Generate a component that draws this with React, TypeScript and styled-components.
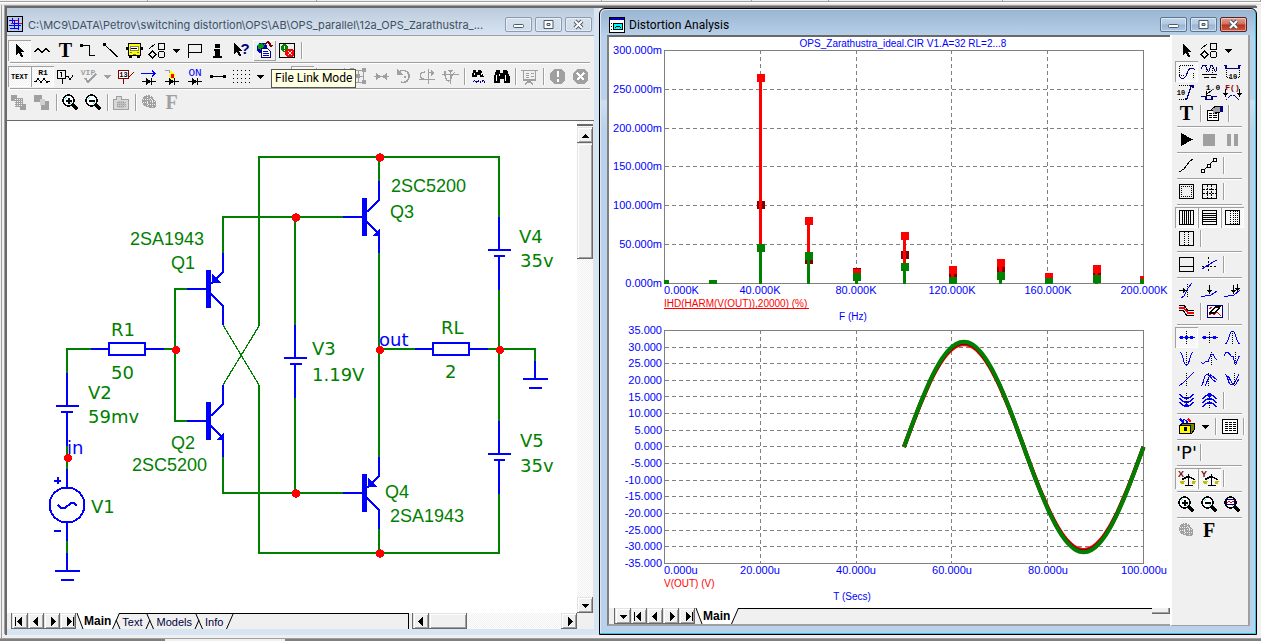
import React from "react";
import styled, { createGlobalStyle, css } from "styled-components";

const GREEN = "#008000";
const BLUE = "#0000ff";
const RED = "#ff0000";
const DARK_RED = "#800000";
const GRAY = "#a0a0a0";

const dither = css`
  background: conic-gradient(#fff 25%, #f0f0f0 0 50%, #fff 0 75%, #f0f0f0 0) 0 0 / 2px 2px;
`;

const Global = createGlobalStyle`
  * { box-sizing: border-box; }
  body { margin: 0; background: #f0f0f0; font-family: "Liberation Sans", Arial, sans-serif; }
  button { font-family: inherit; color: inherit; padding: 0; margin: 0; border: 0; background: none; border-radius: 0; }
  svg { display: block; flex: none; }
`;

/* ---------- application frame ---------- */

const Page = styled.div`
  min-height: 100vh;
  display: flex;
  flex-direction: column;
  background: #f0f0f0;
`;

const StatusStrip = styled.div`
  height: 5px;
  display: flex;
  border-bottom: 1px solid #e3e3e3;
  background: linear-gradient(#f0f0f0 1px, #a0a0a0 1px 2px, #fff 2px 3px, #f0f0f0 3px);
`;

const StripCell = styled.div<{ $grow: number }>`
  flex: ${(p) => p.$grow} 1 0;
  height: 2px;
  border-right: 1px solid #a0a0a0;
`;

const Frame = styled.div`
  margin: 0 2px 0 1px;
  padding: 0 2px 3px 2px;
  border-left: 1px solid #a0a0a0;
`;

const Workspace = styled.main`
  display: grid;
  grid-template-columns: minmax(0, 592fr) minmax(0, 658fr);
  border-style: solid;
  border-color: #696969 #a0a0a0 #f0f0f0 #696969;
  border-width: 2px 0 0 2px;
  box-shadow: -1px -1px 0 #a0a0a0;
  margin: 1px 0 0 1px;
`;

const BottomStrip = styled.div`
  height: 3px;
  display: flex;
  border-top: 1px solid #a0a0a0;
`;

const BottomCell = styled.div<{ $grow: number; $dark?: boolean }>`
  flex: ${(p) => p.$grow} 1 0;
  background: ${(p) => (p.$dark ? "#808080" : "#f0f0f0")};
`;

/* ---------- windows ---------- */

const CircuitWindow = styled.section`
  background: #d7e4f2;
  padding: 0 5px 6px 0;
  display: flex;
  flex-direction: column;
`;

const AnalysisWindow = styled.section`
  display: flex;
  flex-direction: column;
  background: linear-gradient(#99b4d1, #b9d1ea 28px 90px, #d0e0f0 92px, #b9d1ea 120px);
  border: 1px solid #000;
  border-radius: 6px 6px 0 0;
  padding: 0 6px 8px 7px;
  box-shadow: inset -1px -1px 0 #31c4dc, inset 1px 1px 0 #d8e8f8;
`;

const TitleBar = styled.header<{ $active?: boolean }>`
  height: ${(p) => (p.$active ? 26 : 27)}px;
  display: flex;
  align-items: center;
  gap: 4px;
  padding: ${(p) => (p.$active ? "5px 1px 0 2px" : "6px 0 0 0")};
  background: ${(p) => (p.$active ? "none" : "linear-gradient(#bccbdc, #d7e4f2)")};
`;

const Title = styled.h1<{ $active?: boolean }>`
  flex: 1;
  min-width: 0;
  margin: 0;
  white-space: nowrap;
  font: ${(p) => (p.$active ? "12px/18px Roboto" : "11px/18px Inter")}, "Open Sans", sans-serif;
  color: ${(p) => (p.$active ? "#000" : "#43505e")};
`;

const CaptionGroup = styled.div`
  display: flex;
  gap: 3px;
  padding-right: 2px;
`;

const CaptionButton = styled.button<{ $kind: "idle" | "active" | "close" }>`
  width: 27px;
  height: 15px;
  display: flex;
  align-items: center;
  justify-content: center;
  border-radius: 2px;
  border: 1px solid ${(p) => (p.$kind === "close" ? "#5b1f25" : p.$kind === "active" ? "#5b7693" : "#8c9bb0")};
  background: ${(p) =>
    p.$kind === "close"
      ? "linear-gradient(#e0a093, #cf6f5c 48%, #b8321c 52%, #cf5a3c)"
      : p.$kind === "active"
        ? "linear-gradient(#c3d5e8, #b3cae2 48%, #98b5d3 52%, #aec7e0)"
        : "linear-gradient(#d5e0ec, #d0dce9)"};
  box-shadow: inset 0 0 0 1px rgba(255, 255, 255, 0.45);
`;

/* ---------- toolbars ---------- */

const ToolArea = styled.div`
  border-top: 1px solid #a0a0a0;
  background: #f0f0f0;
  border-bottom: 1px solid #696969;
  height: 86px;
`;

const ToolRow = styled.div<{ $top: number; $last?: boolean }>`
  position: relative;
  display: flex;
  height: ${(p) => p.$top + 24}px;
  padding: ${(p) => p.$top}px 0 0 1px;
  margin-right: 4px;
  &::after {
    content: "";
    display: ${(p) => (p.$last ? "none" : "block")};
    position: absolute;
    left: 3px;
    right: 0;
    bottom: 0;
    border-top: 1px solid #a0a0a0;
    border-bottom: 1px solid #fff;
  }
`;

const ToolButton = styled.button<{ $pressed?: boolean; $raised?: boolean; $slim?: boolean }>`
  flex: none;
  width: ${(p) => (p.$slim ? 15 : 23)}px;
  height: 21px;
  display: flex;
  align-items: center;
  justify-content: center;
  ${(p) =>
    p.$pressed &&
    css`
      ${dither}
      box-shadow: inset 1px 1px 0 #a0a0a0, inset -1px -1px 0 #fff;
    `}
  ${(p) =>
    p.$raised &&
    css`
      box-shadow: inset 1px 1px 0 #fff, inset -1px -1px 0 #a0a0a0;
    `}
`;

const Separator = styled.span`
  flex: none;
  width: 5px;
  height: 17px;
  margin-top: 2px;
  background: linear-gradient(90deg, transparent 2px, #a0a0a0 2px 3px, #fff 3px 4px, transparent 4px);
`;

const Tooltip = styled.div`
  position: absolute;
  left: 264px;
  top: 5px;
  z-index: 2;
  padding: 0 3px;
  border: 1px solid #575757;
  background: #ffffe1;
  color: #000;
  white-space: nowrap;
  font: 12px/17px Roboto, "Open Sans", sans-serif;
`;

const SideBar = styled.aside`
  width: 80px;
  flex: none;
  background: #f0f0f0;
  border-left: 2px solid #fff;
  border-right: 2px solid #a0a0a0;
  border-bottom: 1px solid #a0a0a0;
  padding: 5px 0 0 3px;
`;

const SideGroup = styled.div`
  display: flex;
  flex-direction: column;
  margin-right: 6px;
  & + & {
    padding-top: 5px;
    background: linear-gradient(transparent 2px, #a0a0a0 2px 3px, #fff 3px 4px, transparent 4px) 2px 0 no-repeat;
  }
`;

const SideRow = styled.div`
  display: flex;
`;

/* ---------- drawing area, scroll bars, sheet tabs ---------- */

const CanvasRow = styled.div`
  display: flex;
  flex: 1;
  background: #fff;
`;

const Drawing = styled.svg`
  flex: 1 1 0;
  width: 100%;
  min-width: 0;
  height: auto;
  background: #fff;
`;

const VScroll = styled.div`
  width: 17px;
  display: flex;
  flex-direction: column;
  padding-top: 3px;
  ${dither}
  border-right: 1px solid #e3e3e3;
`;

const Splitter = styled.div`
  height: 2px;
  background: #696969;
  margin-bottom: 1px;
`;

const Bevel = styled.button`
  flex: none;
  width: 16px;
  height: 16px;
  display: flex;
  align-items: center;
  justify-content: center;
  background: #f0f0f0;
  box-shadow: inset -1px -1px 0 #696969, inset 1px 1px 0 #e3e3e3, inset 2px 2px 0 #fff, inset -2px -2px 0 #a0a0a0;
`;

const VThumb = styled(Bevel)`
  height: 116px;
`;

const HThumb = styled(Bevel)`
  width: 38px;
`;

const SplitBox = styled.div`
  width: 18px;
  height: 6px;
  background: #f0f0f0;
  box-shadow: inset -1px -1px 0 #696969, inset -2px -2px 0 #a0a0a0;
`;

const Grow = styled.div`
  flex: 1;
`;

const TabRow = styled.div`
  display: flex;
  height: 16px;
  background: #f0f0f0;
  padding-left: 4px;
`;

const NavGroup = styled.div`
  display: flex;
  padding-left: 1px;
  background: #696969;
`;

const Tab = styled.button<{ $active?: boolean }>`
  height: 16px;
  color: ${(p) => (p.$active ? "#000" : "#000040")};
  font-size: ${(p) => (p.$active ? 12 : 11)}px;
  line-height: 16px;
  font-weight: ${(p) => (p.$active ? 700 : 400)};
  background: ${(p) => (p.$active ? "#fff" : "none")};
  border-top: ${(p) => (p.$active ? "none" : "1px solid #000")};
`;

const TabFill = styled.div<{ $open?: boolean }>`
  flex: 1;
  border-top: 1px solid #000;
  border-right: ${(p) => (p.$open ? "none" : "1px solid #000")};
`;

const HScroll = styled.div`
  width: 165px;
  display: flex;
  margin-left: 3px;
  border-left: 1px solid #696969;
  ${dither}
`;

const Corner = styled.div`
  width: 17px;
  background: #f0f0f0;
`;

const Client = styled.div`
  display: flex;
  flex: 1;
`;

const PlotPane = styled.div`
  flex: 1;
  min-width: 0;
  display: flex;
  flex-direction: column;
  background: #f0f0f0;
  border-top: 2px solid #696969;
  border-left: 2px solid #808080;
  border-bottom: 2px solid #a0a0a0;
`;

const PlotTabs = styled(TabRow)`
  padding-left: 5px;
`;

/* ---------- icons ---------- */

type LineProps = { d: string; c?: string; f?: string; w?: number; dash?: string };
const L = ({ d, c = "#000", f = "none", w = 1, dash }: LineProps) => (
  <path d={d} stroke={c} fill={f} strokeWidth={w} strokeDasharray={dash} />
);
const B = ({ d, f = "#000" }: { d: string; f?: string }) => <path d={d} fill={f} />;
const T = ({ x, y, s, c = "#000", children, font = "Liberation Sans", bold = true }: {
  x: number; y: number; s: number; c?: string; children: string; font?: string; bold?: boolean;
}) => (
  <text x={x} y={y} fontSize={s} fill={c} fontFamily={`"${font}", sans-serif`} fontWeight={bold ? 700 : 400} textAnchor="middle">
    {children}
  </text>
);

const DIODE = "M3 15.5h4M13 15.5h4M12.5 12v7";
const DIODE_FILL = "M7 12l5 3.5-5 3.5z";
const SQUARE = "M3.500 3.500h14v14h-14z";
const bulb = (c: string) => (
  <>
    <circle cx="9" cy="9" r="6" fill={c} />
    <path d="M4 7h9M4 10h11M8 3v12M11 4v11" stroke="#f0f0f0" strokeDasharray="1 1" />
    <circle cx="13" cy="12" r="4.5" fill={c} />
    <path d="M9 12h8M11 9.5h5M13 8v9" stroke="#f0f0f0" strokeDasharray="1 1" />
  </>
);
const lens = (
  <>
    <circle cx="8.5" cy="8.5" r="5.5" fill="#fff" stroke="#000" strokeWidth="1.6" />
    <L d="M5 7l2-2M10 12l2-2" c="#00ffff" />
    <L d="M12.5 12.5l5 5" w={3} />
  </>
);

const icons: Record<string, React.ReactNode> = {
  pointer: <B d="M7 4v11l3-2.500 2 5 2-1-2-4.500h3.500z" />,
  component: <L d="M2 11.500h1l3-3 4 4 4-4 3 3h1" />,
  text: <T x={10.5} y={17} s={20} font="Liberation Serif">T</T>,
  wire: <><B d="M2 4h3v3h-3z" /><L d="M4 5.500h7.500v10h5.500" /></>,
  line: <><B d="M2 3h3v3h-3z" /><L d="M4 5l12.500 12" w={1.2} /></>,
  bus: (
    <>
      <L d="M4.500 3.500h12v12h-12z" f="#ffff00" /><B d="M5 16h3v2h-3zM13 16h3v2h-3zM2 7h2v3h-2zM17 7h2v3h-2z" />
      <L d="M6.500 6.500h8v4h-8z" c="#808080" f="#fff" /><L d="M7 9l2-1 2 1 2-1" /><L d="M6 12.500h2M13 12.500h2M9 14.500h3" c="#808000" />
    </>
  ),
  shapes: <><L d="M2.500 8.500l6-5M11.500 3.500h6v6h-6zM5.500 11l3.500 3.500-3.500 3.500-3.500-3.500z" /><circle cx="14.5" cy="14.5" r="3.2" fill="none" stroke="#000" /></>,
  flag: <L d="M3.500 4v14M3.500 4.500h13v8h-13" />,
  info: <B d="M7 4h5v4h-5zM6 9h6v7h2v2h-9v-2h2v-5h-1z" />,
  help: <><B d="M3 3v11l3-2.500 2 5 2-1-2-4.500h3.500z" /><T x={14} y={14} s={15} c="#000080">?</T></>,
  fileLink: (
    <>
      <circle cx="8" cy="8" r="5.5" fill="#0000c0" /><B d="M4 5l4-2 2 3-3 4-3-1z" f="#00a000" /><L d="M3 6l2-2M10 4l2 1" c="#00c0c0" />
      <L d="M11 4l3-2 3 3" c={DARK_RED} w={1.5} /><B d="M14 5h5l-2 3z" f={DARK_RED} />
      <L d="M7.500 8.500h6l3 3v6h-9z" f="#fff" c="#000080" /><L d="M9 11.500h5M9 13.500h6M9 15.500h6" c="#0000c0" />
    </>
  ),
  checks: (
    <>
      <L d="M2.500 3.500h15v14h-15z" f="#f0f0f0" w={1.6} /><circle cx="7.5" cy="8" r="3.7" fill={GREEN} /><L d="M7.500 5.500v3M7.500 9.500v1" c="#fff" />
      <B d="M10 9h5l2 2v4l-2 2h-5l-2-2v-4z" f={RED} /><L d="M11 11l4 4M15 11l-4 4" c="#fff" />
    </>
  ),
  gridText: <T x={10.5} y={13} s={7} font="Liberation Mono">TEXT</T>,
  attrText: <><T x={11} y={9} s={8} font="Liberation Mono">R1</T><L d="M2 15.500h2l2-3 3 4 3-4 3 4 1-1h2" /></>,
  nodeNum: <><L d="M2.500 4.500h8v8h-8z" w={1.5} /><L d="M5 6.500h1.500v4M7 13v5M11 10.500h2l2 3 3-4" /></>,
  vip: <><T x={10} y={9} s={8} c={GRAY} font="Liberation Mono">VIP</T><L d="M7 12l3 4 8-8" c={GRAY} w={2} /></>,
  thirteen: <><L d="M2.500 4.500h10v8h-10z" c={DARK_RED} f="#fff" /><T x={7.5} y={11} s={7} font="Liberation Mono">13</T><L d="M7.500 13v5M13 11l5-5" c={DARK_RED} /></>,
  current: <><L d="M2 7.500h14M13 4.500l3 3-3 3" c={BLUE} /><L d="M3 15.500h14M12.500 12v7" /><B d={DIODE_FILL} /></>,
  power: <><L d="M3 4.500h4l2 3" c={GRAY} w={1.6} /><B d="M9 4l4 5-1 4h-4l-1-4z" f="#ffff00" /><B d="M9 8h3v4h-3z" f={RED} /><L d={DIODE} /><B d={DIODE_FILL} /></>,
  condition: <><T x={10} y={10} s={11} c={BLUE} bold={false} font="Liberation Mono">ON</T><L d="M3 15.500h14M12.500 12v7" /><B d={DIODE_FILL} /></>,
  pins: <><L d="M4 10.500h12" /><B d="M2 9h3v3h-3zM15 9h3v3h-3z" /></>,
  dots: <L d="M2 4.500h17M2 8.500h17M2 12.500h17M2 16.500h17" dash="1 3" />,
  box: <L d="M3.500 3.500h15v14h-15z" w={2} />,
  plain: <L d="M6 10.500h9" c={GRAY} />,
  fit: <><L d="M4.500 4.500h11v12h-11zM10 4v12M4 10.500h12" c={GRAY} /><B d="M2 2h4v4h-4zM14 2h4v4h-4zM2 14h4v4h-4zM14 14h4v4h-4zM8 8h4v4h-4z" f={GRAY} /></>,
  mirror: <><L d="M3 10.500h15" c={GRAY} /><B d="M5 7l5 3.500-5 3.500zM16 7l-5 3.500 5 3.500z" f={GRAY} /></>,
  rotate: <><L d="M5 6a6 6 0 1 1 2 10" c={GRAY} w={1.6} /><B d="M3 3v6h6z" f={GRAY} /><B d="M10 10h2v2h-2z" f={GRAY} /></>,
  flipX: <><L d="M2 13.500h16M11.500 3v15M8 6c-6 0-6 7-1 7M12 6.500h4" c={GRAY} w={1.3} /><B d="M14 4l4 3-4 3z" f={GRAY} /></>,
  flipY: <><L d="M2 8.500h17M5 5v4c1 8 6 8 7 0l3-3M10.500 5v13" c={GRAY} w={1.3} /><B d="M8 4h5l-2.500 3z" f={GRAY} /></>,
  find: <><B d="M5 4h3v2h2v-2h3l3 7h-4v-2h-3v2h-5z" /><L d="M6 7v2M13 7v2" c="#fff" /><L d="M5 15.500l2-1 2 2 2-2 2 2 2-2 2 2" c="#000080" dash="2 1" /></>,
  binoculars: <><B d="M5 4h4v3h3v-3h4l3 7v6h-6v-4h-4v4h-6v-6z" /><L d="M5.500 9v6M14.500 9v6M8 8v2" c="#fff" /></>,
  slides: <><L d="M2 4.500h17M4.500 5v9h12v-9M10 14v3M6 18l4-3 4 3" c={GRAY} w={1.6} /><L d="M7 7.500h3M7 9.500h3M7 11.500h3M12 7.500h3M12 10.500h3" c={GRAY} /></>,
  alert: <><B d="M7 3h7l4 4v7l-4 4h-7l-4-4v-7z" f={GRAY} /><L d="M10.500 5v6M10.500 13v2.500" c="#fff" w={2} /></>,
  stopCheck: <><B d="M7 3h7l4 4v7l-4 4h-7l-4-4v-7z" f={GRAY} /><L d="M7 7l7 7M14 7l-7 7" c="#fff" w={2} /></>,
  front: <><B d="M2 3h6v6h-6zM11 12h6v6h-6zM6 6h8v9h-8z" f={GRAY} /><L d="M6 7.500h8M6 9.500h8M6 11.500h8M6 13.500h8" c="#f0f0f0" dash="1 1" /></>,
  back: <><B d="M2 3h8v7h-8zM9 9h8v9h-8z" f={GRAY} /><B d="M8 7h5v6h-5z" f="#d0d0d0" /></>,
  zoomIn: <>{lens}<L d="M5.500 8.500h6M8.500 5.500v6" w={2} /></>,
  zoomOut: <>{lens}<L d="M5.500 8.500h6" w={2} /></>,
  zoomFit: <>{lens}<L d="M4.500 5.500h8v5h-8z" c="#000080" f="#fff" /><L d="M5 9l2-2 2 2 2-2 1 1" c={RED} /></>,
  camera: <><L d="M2.500 7.500h3v-3h5v3h7v10h-15z" c={GRAY} f="#d8d8d8" w={1.5} /><circle cx="10" cy="12.5" r="4" fill="#c0c0c0" /><L d="M6 10.500h9M6 12.500h9M6 14.500h9" c={GRAY} dash="1 1" /></>,
  globe: bulb(GRAY),
  fontGray: <T x={9.5} y={17} s={20} c={GRAY} font="Liberation Serif">F</T>,
  font: <T x={10} y={17} s={20} font="Liberation Serif">F</T>,
  scopeWave: <><L d="M3 13.500v-9.500h14M3 14.500h6M17.500 12v6" dash="1 1" /><L d="M3 15l2 2h3l2-2 2-5 2-3h3l2 2" c="#000080" /></>,
  peakWave: <><L d="M2 8l2-4h2l3 6h1l2-6h1l3 6h1l1-4" c="#000080" /><L d="M7 4v8M13 5v7" dash="1 1" /><L d="M3 13.500h15M5 16.500h5M12 16.500h5" w={1.6} /></>,
  horizTag: <><L d="M2 4.500h2v3h13v-3h2" c="#000080" w={1.5} /><L d="M4.500 9v8M17.500 9v8M5 16.500h3M14 16.500h3" dash="1 1" /><T x={11} y={18} s={7} font="Liberation Mono">10</T></>,
  vertTag: <><L d="M3 3.500h13M3 17.500h8" dash="1 1" /><T x={5} y={13} s={7} font="Liberation Mono">10</T><L d="M9 17h2l4-13h2v2" c="#000080" w={1.3} /></>,
  pointTag: <><T x={14} y={8} s={8} font="Liberation Mono">1.0</T><L d="M13 8l-5 4M7.500 9v4h4" /><L d="M2 14.500h5v3h6v-3h5" c="#000080" w={1.4} /></>,
  perfTag: <><T x={10.5} y={8} s={8} c={DARK_RED} font="Liberation Mono">F()</T><L d="M3.500 7v8M17.500 7v8" /><B d="M1 11h5l-2.500 3zM15 11h5l-2.500 3z" /><L d="M4 18l5-5h3l5 5" c="#000080" dash="2 1" /></>,
  props: <><L d="M3.500 7.500h11v10h-11z" f="#fff" w={1.5} /><L d="M5 10.500h3M9 10.500h4M5 12.500h3M9 12.500h4M5 14.500h3M9 14.500h4" /><B d="M8 6l3-2h6v5h-4l-3 2z" f={GRAY} /><L d="M7 7l4-3.500h5M11 9h5" /><B d="M16 3h3v6h-3z" f="#000080" /></>,
  run: <B d="M5 4l12 6.500-12 6.500z" />,
  stop: <B d="M4 5h12v12h-12z" f={GRAY} />,
  pause: <B d="M5 5h4v12h-4zM12 5h4v12h-4z" f={GRAY} />,
  curve: <L d="M3 17l5-3 5-7 4-3" />,
  tokens: <><L d="M4 16l12-12" /><L d="M2.500 14.500h3v3h-3zM8.500 9.500h3v3h-3zM14.500 3.500h3v3h-3z" f="#fff" /></>,
  ruler: <><L d={SQUARE} w={1.6} /><L d="M5 5.500h12M5 15.500h12M5.500 5v11M15.500 5v11" dash="1 1" /></>,
  plusMarks: <><L d={SQUARE} w={1.6} /><L d="M4 8.500h13M4 12.500h13M8.500 4v13M12.500 4v13" dash="2 1" /></>,
  vGrid: <><L d={SQUARE} w={1.6} /><L d="M6.500 4v13M8.500 4v13M10.500 4v13M12.500 4v13M14.500 4v13" /></>,
  hGrid: <><L d={SQUARE} w={1.6} /><L d="M4 6.500h13M4 8.500h13M4 10.500h13M4 12.500h13M4 14.500h13" /></>,
  minorGrid: <><L d={SQUARE} w={1.6} /><L d="M8.500 4v13M11.500 4v13M13.500 4v13M15.500 4v13" dash="1 1" /></>,
  baseline: <><L d={SQUARE} w={1.6} /><L d="M8.500 4v13M12.500 4v13" dash="1 1" /></>,
  panel: <><L d={SQUARE} w={1.4} /><L d="M3 12.500h14" /></>,
  slope: <><L d="M3 12.500h15M9.500 3v15" dash="2 2" /><L d="M3 15l6-4 9-5" c={BLUE} /></>,
  cursorRight: <><L d="M11.500 4v14" dash="1 1" /><L d="M5 18l3-2 4-8 4-5" c={BLUE} /><L d="M3 10.500h6" /><B d="M7 8l4 2.500-4 2.500z" /></>,
  cursorDown: <><L d="M2 16h4l6-1 6-4" c={BLUE} /><L d="M10.500 5v6" /><B d="M8 10h5l-2.500 4z" /></>,
  cursorBoth: <><L d="M2 16h4l6-1 6-5" c={BLUE} /><L d="M11.500 5v6M15.500 4v5" /><B d="M9 10h5l-2.500 4zM13 8h5l-2.500 4z" /></>,
  curves: <><L d="M3 4.500h5l4 5h6M3 9.500h4l4 5h7" w={1.4} /><L d="M3 7h5l4 5h6" c={RED} w={1.6} /></>,
  erase: <><L d="M3.500 4.500h15v12h-15z" c="#000080" f="#fff" w={1.8} /><L d="M5 14l3-2 2 2 3-3 4 4M5 8l3-2" c={RED} /><L d="M6 12l5-6h5l-5 6h-5z" f="#fff" w={1.4} /></>,
  cursorData: <><L d="M3 10.500h16" c={BLUE} /><L d="M10.500 4v14" dash="1 1" /><B d="M4 9h3v3h-3zM9 9h3v3h-3zM14 9h3v3h-3z" f={BLUE} /></>,
  cursorStep: <><L d="M3 10.500h16" c={BLUE} /><L d="M10.500 5v12" dash="1 1" /><B d="M4 9h3v3h-3zM14 9h3v3h-3z" f={BLUE} /></>,
  peak: <><L d="M3 17c4 0 4-13 7.500-13s3.500 13 7.500 13" c={BLUE} /><L d="M10.500 4v14" dash="1 1" /></>,
  valley: <><L d="M4 4c3 0 3 13 6.500 13s3.500-13 6.500-13" c={BLUE} /><L d="M10.500 4v14" dash="1 1" /></>,
  high: <><L d="M2 14l2 2 3-3 2 1 3-8h2l2 4 2 2" c={BLUE} /><L d="M12.500 4v14" dash="1 1" /></>,
  low: <><L d="M2 8l2-4h2l3 4h2l2 8h1l3-8h1" c={BLUE} /><L d="M13.500 4v14" dash="1 1" /></>,
  inflection: <><L d="M3 17l4-3 8-8 3-3" c={BLUE} /><L d="M10.500 4v14" dash="1 1" /></>,
  globalHigh: <><L d="M2 17c3-2 3-12 6-12s4 6 9 8M6 17c2-3 4-12 6-11l6 5" c={BLUE} /><L d="M9.500 4v14" dash="1 1" /></>,
  globalLow: <><L d="M3 5c3 0 3 11 6 11s5-4 8-11M6 7c3 4 5 12 8 8l3-5" c={BLUE} /><L d="M12.500 4v14" dash="1 1" /></>,
  bottomCurves: <><L d="M3 4l5 4h5l5-4M3 8l5 4h5l5-4M3 12l5 4h5l5-4" c={BLUE} w={1.2} /><L d="M10.500 3v12" dash="1 1" /><circle cx="10.5" cy="15.500" r="2" fill={BLUE} /></>,
  topCurves: <><L d="M3 9l5-4h5l5 4M3 13l5-4h5l5 4M3 17l5-4h5l5 4" c={BLUE} w={1.2} /><L d="M10.500 5v13" dash="1 1" /><circle cx="10.5" cy="5" r="2" fill={BLUE} /></>,
  chest: <><L d="M4 3l3 3M8 3l-2 5M10 4l2 4" c={BLUE} w={2} /><L d="M12 3l3 3" c={RED} w={2} /><L d="M3.500 9.500l3-2h12v6l-3 4h-12z" f="#808000" /><L d="M3.500 9.500h11v8h-11z" f="#ffff00" /><B d="M8 11h3v4h-3z" /></>,
  numeric: <><L d="M3.500 3.500h15v14h-15z" w={1.4} f="#fff" /><L d="M6 6.500h11M6 8.500h11M6 10.500h11M6 12.500h11M6 14.500h11" dash="3 1" /></>,
  perf: <T x={10.5} y={17} s={18} bold={false} font="DejaVu Sans">'P'</T>,
  scaleX: <><T x={5} y={9} s={9} c={DARK_RED}>X</T><L d="M12.500 6v11M9 17.500h8M6 11.500l6-3 7 3" w={1.4} /><B d="M4 13h5l-1 3h-3zM16 13h4l-1 3h-3z" f="#c0c000" /></>,
  scaleY: <><T x={5} y={9} s={9} c={DARK_RED}>Y</T><L d="M12.500 6v11M9 17.500h8M6 11.500l6-3 7 3" w={1.4} /><B d="M4 13h5l-1 3h-3zM16 13h4l-1 3h-3z" f="#c0c000" /></>,
};

const Icon = ({ name }: { name: string }) => (
  <svg width="21" height="21" viewBox="0 0 21 21" shapeRendering="crispEdges" aria-hidden="true">
    {icons[name]}
  </svg>
);

const Arrow = ({ dir, bar, c = "#000" }: { dir: "down" | "up" | "left" | "right"; bar?: boolean; c?: string }) => {
  const shapes = { down: "M2 4h7l-3.500 4z", up: "M2 8h7l-3.500-4z", left: "M7 1v9l-5-4.500z", right: "M4 1v9l5-4.500z" };
  return (
    <svg width="11" height="11" viewBox="0 0 11 11" shapeRendering="crispEdges" aria-hidden="true">
      <path d={shapes[dir]} fill={c} />
      {bar && <path d={dir === "left" ? "M0 1h1v9h-1z" : "M10 1h1v9h-1z"} fill={c} />}
    </svg>
  );
};

/* Tool lists: "|" is a separator, "v" a menu arrow, "*" marks a pressed tool, "^" a raised one. */
const renderTools = (list: string) =>
  list.split(" ").map((item, i) => {
    if (item === "|") return <Separator key={i} />;
    if (item === "v" || item === "vg")
      return (
        <ToolButton key={i} $slim aria-label="More choices">
          <Arrow dir="down" c={item === "vg" ? GRAY : "#000"} />
        </ToolButton>
      );
    const name = item.replace(/[*^]/, "");
    return (
      <ToolButton key={i} aria-label={name} $pressed={item[0] === "*"} $raised={item[0] === "^"}>
        <Icon name={name} />
      </ToolButton>
    );
  });

const sideGroups = [
  ["pointer shapes v", "*scopeWave peakWave horizTag", "vertTag pointTag perfTag", "text | props |"],
  ["run stop pause"],
  ["curve tokens |"],
  ["ruler plusMarks |"],
  ["*vGrid *hGrid *minorGrid", "baseline |"],
  ["panel slope |"],
  ["cursorRight cursorDown cursorBoth", "curves | erase |"],
  ["*cursorData cursorStep peak", "valley high low", "inflection globalHigh globalLow", "bottomCurves topCurves |"],
  ["chest v | numeric |"],
  ["perf |"],
  ["*scaleX *scaleY |"],
  ["zoomIn zoomOut zoomFit"],
  ["globe font"],
];

const Captions = ({ active }: { active?: boolean }) => {
  const kind = active ? "active" : "idle";
  const ink = "#4d5a6b";
  return (
    <CaptionGroup>
      <CaptionButton $kind={kind} aria-label="Minimize">
        <svg width="13" height="11"><rect x="1.5" y="5.5" width="10" height="3" fill="#fff" stroke={ink} rx="1" /></svg>
      </CaptionButton>
      <CaptionButton $kind={kind} aria-label="Maximize">
        <svg width="13" height="11"><path d="M2 1.500h9v8h-9zM5 4.500v2h3v-2z" fill="#fff" fillRule="evenodd" stroke={ink} /></svg>
      </CaptionButton>
      <CaptionButton $kind={active ? "close" : "idle"} aria-label="Close">
        <svg width="13" height="11">
          <path d="M3 2l7 7M10 2l-7 7" stroke={ink} strokeWidth="4" />
          <path d="M3 2l7 7M10 2l-7 7" stroke="#fff" strokeWidth="2" />
        </svg>
      </CaptionButton>
    </CaptionGroup>
  );
};

/* ---------- circuit drawing ---------- */

const WIRES = [
  "M67 382V349H92M163 349H175M187 289H175V421H187M223 253V217H343M259 326V157H499V217M379 157V181M379 253V457",
  "M379 349H415M488 349H535V361M499 289V421M499 493V553H259V385M379 553V529M223 457V493H343M295 217V325M295 397V493",
  "M67 445V469M67 541V553",
].join("");

const PARTS = [
  "M91 349H109M145 349H164M415 349H433M470 349H488M535 361V379M523 379H548M529 388H542",
  "M67 373V406M56 406H79M61 412H73M67 412V446M67 469V487M67 523V541M67 553V571M55 571H80M61 580H74",
  "M295 325V358M284 358H307M290 364H302M295 364V398M499 217V250M488 250H511M494 256H505M499 256V290M499 421V454M488 454H511M494 460H505M499 460V494",
].join("");

const Transistor = ({ x, y, pnp }: { x: number; y: number; pnp?: boolean }) => (
  <g transform={`translate(${x} ${y})`} stroke={BLUE} fill="none" strokeWidth="2">
    <path d="M-36 0H-15" />
    <path d="M-14.500 -19V19" strokeWidth="5" />
    <path d="M-12 -5L0 -17V-36M-12 5L0 17V36" />
    <path d={pnp ? "M-11 -15V-6H-2z" : "M1 11V19H-7z"} fill={BLUE} stroke="none" />
  </g>
);

const NODES = [[380, 157.5], [296, 217.5], [176, 350], [380, 350], [500, 350], [68, 458], [296, 493.5], [380, 553.5]];

const LABELS: [string, number, number, boolean?][] = [
  ["2SA1943", 130, 245, true], ["Q1", 171, 269, true], ["Q2", 171, 449, true], ["2SC5200", 132, 471, true],
  ["2SC5200", 391, 192, true], ["Q3", 390, 218, true], ["Q4", 385, 498, true], ["2SA1943", 390, 522, true],
  ["R1", 111, 336], ["50", 111, 379], ["V2", 88, 399], ["59mv", 88, 423], ["V1", 91, 513],
  ["V3", 312, 355], ["1.19V", 312, 381], ["RL", 441, 334], ["2", 445, 378], ["V4", 519, 243],
  ["35v", 520, 267], ["V5", 520, 447], ["35v", 520, 472],
];

const Schematic = () => (
  <Drawing viewBox="7 121 570 492" preserveAspectRatio="xMidYMin meet" role="img" aria-label="Circuit schematic">
    <g shapeRendering="crispEdges">
      <path d={WIRES} stroke={GREEN} strokeWidth="2" fill="none" />
      <path d="M223 325L259 385M259 326L223 385" stroke={GREEN} strokeWidth="1.300" />
      <path d={PARTS} stroke={BLUE} strokeWidth="2" fill="none" />
      <path d="M109 343H145V355H109zM433 343H469V355H433z" stroke={BLUE} strokeWidth="2" fill="#fff" />
      <Transistor x={223} y={289} pnp />
      <Transistor x={223} y={421} />
      <Transistor x={379} y={217} />
      <Transistor x={379} y={493} pnp />
      <circle cx="67" cy="505" r="17.5" stroke={BLUE} strokeWidth="2" fill="#fff" />
      <path d="M58 505l3 3h4l6-5h3l3 3M54 480.500h7M57.500 477v7M54 531h7" stroke={BLUE} strokeWidth="2" fill="none" />
      {NODES.map(([x, y]) => (
        <circle key={`${x}-${y}`} cx={x} cy={y} r="4.2" fill={RED} />
      ))}
    </g>
    <g fontSize="18" fill={GREEN}>
      {LABELS.map(([text, x, y, arial]) => (
        <text key={`${x}-${y}`} x={x} y={y} fontFamily={arial ? '"Liberation Sans", Arial, sans-serif' : '"DejaVu Sans", Verdana, sans-serif'}>
          {text}
        </text>
      ))}
      <text x="67" y="454" fill={BLUE} fontFamily='"DejaVu Sans", Verdana, sans-serif'>in</text>
      <text x="379" y="346" fill={BLUE} fontFamily='"DejaVu Sans", Verdana, sans-serif'>out</text>
    </g>
  </Drawing>
);

/* ---------- analysis plots ---------- */

const X0 = 664.5;
const X1 = 1143.5;
const stepX = (X1 - X0) / 5;
const harmonics = [
  { red: 0, dark: 0, green: 284 }, { red: 0, dark: 0, green: 284 }, { red: 78, dark: 205, green: 248 },
  { red: 221, dark: 260, green: 256 }, { red: 273, dark: 272, green: 277 }, { red: 236, dark: 255, green: 267 },
  { red: 270, dark: 276, green: 281 }, { red: 263, dark: 270, green: 276 }, { red: 277, dark: 280, green: 282 },
  { red: 269, dark: 275, green: 279 }, { red: 280, dark: 282, green: 283 },
];

const Grid = ({ top, rows }: { top: number; rows: number }) => (
  <g shapeRendering="crispEdges" stroke="#808080" fill="none">
    {Array.from({ length: rows - 1 }, (_, i) => {
      const y = Math.floor(top + ((i + 1) * 233) / rows + 0.4) + 0.5;
      return <path key={`h${i}`} d={`M${X0} ${y}H${X1}`} strokeDasharray="4 3" />;
    })}
    {[1, 2, 3, 4].map((i) => (
      <path key={`v${i}`} d={`M${Math.round(X0 + i * stepX - 0.5) + 0.5} ${top}v233`} strokeDasharray="4 3" />
    ))}
    <rect x={X0} y={top + 0.5} width={X1 - X0} height="233" />
  </g>
);

const sine = (amp: number) => {
  const pts: string[] = [];
  for (let i = 0; i <= 120; i++) {
    const x = 904 + (239.5 * i) / 120;
    pts.push(`${x.toFixed(1)} ${(447 - amp * 3.33 * Math.sin((i / 120) * 2 * Math.PI)).toFixed(1)}`);
  }
  return `M${pts.join("L")}`;
};

const Plots = () => (
  <Drawing viewBox="609 37 561 571" preserveAspectRatio="xMidYMin meet" role="img" aria-label="Harmonic distortion and output voltage plots">
    <Grid top={50} rows={6} />
    <Grid top={330} rows={14} />
    <clipPath id="plotArea"><rect x="664" y="45" width="480" height="239" /></clipPath>
    <g clipPath="url(#plotArea)" shapeRendering="crispEdges">
      {harmonics.map((h, i) => {
        const x = Math.round(X0 + (i * stepX) / 2 - 0.1);
        return (["dark", "red", "green"] as const).map((k) =>
          h[k] ? (
            <path
              key={`${i}${k}`}
              d={`M${x - 3} ${h[k] - 4}h8v8h-3V284h-3V${h[k] + 4}h-2z`}
              fill={k === "dark" ? DARK_RED : k === "red" ? RED : GREEN}
            />
          ) : null
        );
      })}
    </g>
    <path d={sine(30.9)} stroke={RED} strokeWidth="4" fill="none" />
    <path d={sine(31.3)} stroke={DARK_RED} strokeWidth="4" fill="none" />
    <path d={sine(31.6)} stroke={GREEN} strokeWidth="4" fill="none" />
    <g fill={BLUE} fontSize="11" fontFamily='"Liberation Sans", Arial, sans-serif'>
      <g textAnchor="end">
        {[300, 250, 200, 150, 100, 50, 0].map((v, i) => (
          <text key={v} x="662" y={Math.round(54 + i * 38.8)}>{v.toFixed(3)}m</text>
        ))}
        {Array.from({ length: 15 }, (_, i) => (
          <text key={i} x="662" y={Math.round(334 + i * 16.64)}>{(35 - i * 5).toFixed(3)}</text>
        ))}
      </g>
      <text x="664" y="294">0.000K</text>
      <text x="664" y="574">0.000u</text>
      <g textAnchor="middle">
        {[1, 2, 3, 4, 5].map((i) => (
          <React.Fragment key={i}>
            <text x={Math.round(X0 + i * stepX)} y="294">{(i * 40).toFixed(3)}K</text>
            <text x={Math.round(X0 + i * stepX)} y="574">{(i * 20).toFixed(3)}u</text>
          </React.Fragment>
        ))}
      </g>
    </g>
    <g fontSize="10" fill={BLUE} textAnchor="middle" fontFamily='"Liberation Sans", Arial, sans-serif'>
      <text x="903" y="47">OPS_Zarathustra_ideal.CIR V1.A=32 RL=2...8</text>
      <text x="853" y="320">F (Hz)</text>
      <text x="852" y="600">T (Secs)</text>
      <g fill={RED} textAnchor="start">
        <text x="664" y="307">IHD(HARM(V(OUT)),20000) (%)</text>
        <text x="664" y="587">V(OUT) (V)</text>
      </g>
    </g>
    <path d="M664 308.500H809" stroke={RED} />
  </Drawing>
);

/* ---------- sheet tabs ---------- */

const Edge = ({ w, line, fill, top }: { w: number; line: string; fill?: string; top?: string }) => (
  <svg width={w} height="16" viewBox={`0 0 ${w} 16`} aria-hidden="true">
    {fill && <path d={fill} fill="#fff" />}
    <path d={line} stroke="#000" fill="none" />
    {top && <path d={top} stroke="#000" shapeRendering="crispEdges" />}
  </svg>
);

const NavButtons = () => (
  <>
    <Bevel aria-label="First page"><Arrow dir="left" bar /></Bevel>
    <Bevel aria-label="Previous page"><Arrow dir="left" /></Bevel>
    <Bevel aria-label="Next page"><Arrow dir="right" /></Bevel>
    <Bevel aria-label="Last page"><Arrow dir="right" bar /></Bevel>
  </>
);

export default function App() {
  return (
    <Page>
      <Global />
      <StatusStrip>
        <StripCell $grow={148} /><StripCell $grow={169} /><StripCell $grow={285} /><StripCell $grow={150} />
        <StripCell $grow={77} /><StripCell $grow={174} /><StripCell $grow={258} />
      </StatusStrip>
      <Frame>
        <Workspace>
          <CircuitWindow>
            <TitleBar>
              <svg width="17" height="17" viewBox="0 0 17 17" shapeRendering="crispEdges" aria-hidden="true">
                <rect x="0.5" y="0.5" width="15" height="15" fill="#b8cbe0" stroke="#000" />
                <path d="M2 4.500h5v8M5 2v5h6v7M2 9.500h12M11.500 2v9M3 12.500h8" stroke={BLUE} fill="none" />
                <path d="M8 4.500h3M12 7.500h3M4 7.500h2" stroke={RED} />
              </svg>
              <Title>C:\MC9\DATA\Petrov\switching distortion\OPS\AB\OPS_parallel\12a_OPS_Zarathustra_...</Title>
              <Captions />
            </TitleBar>
            <ToolArea>
              <ToolRow $top={4}>
                {renderTools("*pointer component text wire line bus shapes v flag info help ^fileLink checks |")}
              </ToolRow>
              <ToolRow $top={2}>
                {renderTools("*gridText *attrText nodeNum vip vg thirteen current power condition pins dots v box *plain | plain | fit mirror rotate flipX flipY | find binoculars | slides | alert stopCheck")}
                <Tooltip role="tooltip">File Link Mode</Tooltip>
              </ToolRow>
              <ToolRow $top={2} $last>
                {renderTools("front back | zoomIn zoomOut | camera | globe fontGray")}
              </ToolRow>
            </ToolArea>
            <CanvasRow>
              <Schematic />
              <VScroll>
                <Splitter />
                <Bevel aria-label="Scroll up"><Arrow dir="up" /></Bevel>
                <VThumb aria-label="Vertical position" />
                <Grow />
                <Bevel aria-label="Scroll down"><Arrow dir="down" /></Bevel>
              </VScroll>
            </CanvasRow>
            <TabRow>
              <NavGroup><NavButtons /></NavGroup>
              <Edge w={8} line="M1 0L7 16" fill="M1 0h7v16h-1z" />
              <Tab $active>Main</Tab>
              <Edge w={11} line="M8.500 0L1.500 16M5 7l4 9" fill="M0 0h8L1 16h-1z" top="M8 0.500h3" />
              <Tab>Text</Tab>
              <Edge w={14} line="M3.500 0l7 16M3 16l4-9" top="M0 0.500h14" />
              <Tab>Models</Tab>
              <Edge w={13} line="M3.500 0l7 16M3 16l4-9" top="M0 0.500h13" />
              <Tab>Info</Tab>
              <Edge w={14} line="M10.500 0L3.500 16" top="M0 0.500h14" />
              <TabFill />
              <HScroll>
                <Bevel aria-label="Scroll left"><Arrow dir="left" /></Bevel>
                <HThumb aria-label="Horizontal position" />
                <Grow />
                <Bevel aria-label="Scroll right"><Arrow dir="right" /></Bevel>
              </HScroll>
              <Corner />
            </TabRow>
          </CircuitWindow>
          <AnalysisWindow>
            <TitleBar $active>
              <svg width="16" height="16" viewBox="0 0 16 16" shapeRendering="crispEdges" aria-hidden="true">
                <rect x="0.5" y="0.5" width="15" height="15" fill="#fff" stroke="#000" />
                <rect x="1" y="1" width="14" height="2" fill="#0000c0" />
                <rect x="4.5" y="6.5" width="9" height="6" fill="#00ffff" stroke="#000" />
                <path d="M6 11l2-2h2l2 2M2 6.500h1M2 9.500h1M2 12.500h1" stroke="#000" fill="none" />
              </svg>
              <Title $active>Distortion Analysis</Title>
              <Captions active />
            </TitleBar>
            <Client>
              <PlotPane>
                <Plots />
                <PlotTabs>
                  <NavGroup>
                    <Bevel aria-label="Page list"><Arrow dir="down" /></Bevel>
                    <NavButtons />
                  </NavGroup>
                  <Edge w={8} line="M1 0L7 16" fill="M1 0h7v16h-1z" />
                  <Tab $active>Main</Tab>
                  <Edge w={11} line="M8.500 0L1.500 16" fill="M0 0h8L1 16h-1z" top="M8 0.500h3" />
                  <TabFill $open />
                  <SplitBox />
                </PlotTabs>
              </PlotPane>
              <SideBar>
                {sideGroups.map((rows, i) => (
                  <SideGroup key={i}>
                    {rows.map((row) => (
                      <SideRow key={row}>{renderTools(row)}</SideRow>
                    ))}
                  </SideGroup>
                ))}
              </SideBar>
            </Client>
          </AnalysisWindow>
        </Workspace>
      </Frame>
      <BottomStrip>
        <BottomCell $grow={165} $dark /><BottomCell $grow={120} /><BottomCell $grow={976} $dark />
      </BottomStrip>
    </Page>
  );
}
